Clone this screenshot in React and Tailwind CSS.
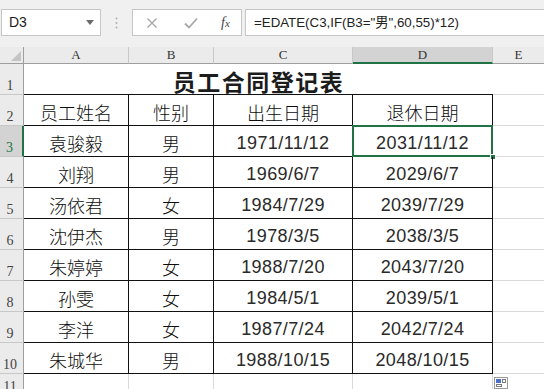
import React from 'react';

const rows = [
  ['袁骏毅', '男', '1971/11/12', '2031/11/12'],
  ['刘翔', '男', '1969/6/7', '2029/6/7'],
  ['汤依君', '女', '1984/7/29', '2039/7/29'],
  ['沈伊杰', '男', '1978/3/5', '2038/3/5'],
  ['朱婷婷', '女', '1988/7/20', '2043/7/20'],
  ['孙雯', '女', '1984/5/1', '2039/5/1'],
  ['李洋', '女', '1987/7/24', '2042/7/24'],
  ['朱城华', '男', '1988/10/15', '2048/10/15'],
];

const cn = { fontFamily: '"Noto Sans CJK SC", sans-serif' };
const num = { fontFamily: '"Liberation Sans", "Noto Sans CJK SC", sans-serif' };
const serif = { fontFamily: '"Liberation Serif", serif' };

function RowNum({ n, active, top }) {
  return (
    <div
      className={`h-full flex ${top ? 'items-start pt-[6px]' : 'items-end pb-[1px]'} justify-center pr-[3px] text-[14px] leading-none ${active ? 'bg-[#d3d3d3] text-[#217346] border-r-2 border-r-[#217346]' : 'bg-[#ebebeb] text-[#444] border-r border-r-[#9e9e9e]'} border-b border-b-[#c8c8c8]`}
      style={serif}
    >
      {n}
    </div>
  );
}

export default function App() {
  return (
    <div className="w-[544px] h-[389px] overflow-hidden bg-white text-[#1c1c1c]">
      {/* formula bar */}
      <div className="h-[47px] bg-[#f0f0f0] flex items-start pt-[9px] pl-[1px]">
        <div className="w-[100px] h-[27px] bg-white border border-[#c6c6c6] flex items-center justify-between pl-[7px] pr-[6px]">
          <span className="text-[14px]" style={num}>D3</span>
          <svg width="8" height="5" viewBox="0 0 8 5"><path d="M0 0h8L4 5z" fill="#6a6a6a" /></svg>
        </div>
        <div className="w-[31px] flex justify-center pt-[8px]">
          <svg width="3" height="12" viewBox="0 0 3 12">
            <circle cx="1.5" cy="1.5" r="1" fill="#b0b0b0" />
            <circle cx="1.5" cy="6" r="1" fill="#b0b0b0" />
            <circle cx="1.5" cy="10.5" r="1" fill="#b0b0b0" />
          </svg>
        </div>
        <div className="w-[110px] h-[27px] bg-white border border-[#c6c6c6] flex items-center">
          <svg className="ml-[13px]" width="12" height="12" viewBox="0 0 12 12"><path d="M1.5 1.5l9 9M10.5 1.5l-9 9" stroke="#a8a8a8" strokeWidth="1.4" /></svg>
          <svg className="ml-[26px]" width="14" height="12" viewBox="0 0 14 12"><path d="M1 6.5l4 4L13 1.5" stroke="#a8a8a8" strokeWidth="1.8" fill="none" /></svg>
          <span className="ml-[23px] text-[14px] italic text-[#444]" style={serif}>f<span className="text-[11px]">x</span></span>
        </div>
        <div className="ml-[3px] flex-1 h-[27px] bg-white border border-[#c6c6c6] border-r-0 flex items-center pl-[8px]">
          <span className="text-[13.3px] text-[#222]" style={num}>=EDATE(C3,IF(B3="男",60,55)*12)</span>
        </div>
      </div>

      {/* sheet */}
      <div className="grid grid-cols-[24px_105px_85px_139px_140px_1fr] grid-rows-[17px_31px_31px_31px_31px_31px_31px_31px_31px_31px_31px_31px]">
        {/* column headers */}
        <div className="bg-[#ebebeb] border-r border-b border-[#9e9e9e] flex items-end justify-end p-[2px]">
          <svg width="10" height="10" viewBox="0 0 10 10"><path d="M10 0v10H0z" fill="#c4c4c4" /></svg>
        </div>
        {['A', 'B', 'C'].map((c) => (
          <div key={c} className="bg-[#ebebeb] border-r border-r-[#c8c8c8] border-b border-b-[#9e9e9e] flex items-center justify-center text-[13px] text-[#333]" style={serif}>{c}</div>
        ))}
        <div className="bg-[#d3d3d3] border-r border-r-[#c8c8c8] border-b-2 border-b-[#217346] flex items-center justify-center text-[13px] text-[#333]" style={serif}>D</div>
        <div className="bg-[#ebebeb] border-b border-b-[#9e9e9e] flex items-center justify-center text-[13px] text-[#333]" style={serif}>E</div>

        {/* row 1 title */}
        <RowNum n="1" />
        <div className="col-span-4 border-b border-b-[#111] flex items-end justify-center pb-[1px] text-[23px] font-bold leading-none tracking-[1.5px]" style={cn}>
          员工合同登记表
        </div>
        <div className="border-b border-[#d9d9d9]" />

        {/* row 2 header */}
        <RowNum n="2" />
        {['员工姓名', '性别', '出生日期', '退休日期'].map((h) => (
          <div key={h} className="border-r border-b border-[#111] flex items-center justify-center pt-[4px] text-[18px] font-light text-[#0d0d0d] leading-none" style={cn}>{h}</div>
        ))}
        <div className="border-b border-[#d9d9d9]" />

        {rows.map((r, i) => (
          <React.Fragment key={i}>
            <RowNum n={i + 3} active={i === 0} />
            <div className="border-r border-b border-[#111] flex items-center justify-center pt-[4px] text-[18px] font-light text-[#0d0d0d] leading-none" style={cn}>{r[0]}</div>
            <div className="border-r border-b border-[#111] flex items-center justify-center pt-[4px] text-[18px] font-light text-[#0d0d0d] leading-none" style={cn}>{r[1]}</div>
            <div className="border-r border-b border-[#111] flex items-center justify-center pt-[3px] text-[18px] text-[#2a2a2a] leading-none tracking-[0.4px]" style={num}>{r[2]}</div>
            <div className="relative border-r border-b border-[#111] flex items-center justify-center pt-[3px] text-[18px] text-[#2a2a2a] leading-none tracking-[0.4px]" style={num}>
              {r[3]}
              {i === 0 && (
                <>
                  <div className="absolute left-[-1px] top-[-1px] right-[-1px] bottom-[-1px] border-2 border-[#217346]" />
                  <div className="absolute right-[-4px] bottom-[-4px] w-[6px] h-[6px] bg-[#217346] border border-white" />
                </>
              )}
            </div>
            <div className="border-b border-[#d9d9d9]" />
          </React.Fragment>
        ))}

        {/* row 11 */}
        <RowNum n="11" top />
        <div className="border-r border-[#d9d9d9]" />
        <div className="border-r border-[#d9d9d9]" />
        <div className="border-r border-[#d9d9d9]" />
        <div className="relative border-r border-[#d9d9d9]">
          <div className="absolute right-[-16px] top-[3px] w-[14px] h-[12px] border border-[#9a9a9a] bg-white flex flex-col p-[1px] gap-[1px]">
            <div className="flex gap-[1px] h-[4px]"><div className="w-[6px] bg-[#4f6fc7]" /><div className="w-[4px] border border-[#7a7a7a]" /></div>
            <div className="flex gap-[1px] h-[4px]"><div className="w-[6px] border border-[#7a7a7a]" /></div>
          </div>
        </div>
        <div />
      </div>
    </div>
  );
}
